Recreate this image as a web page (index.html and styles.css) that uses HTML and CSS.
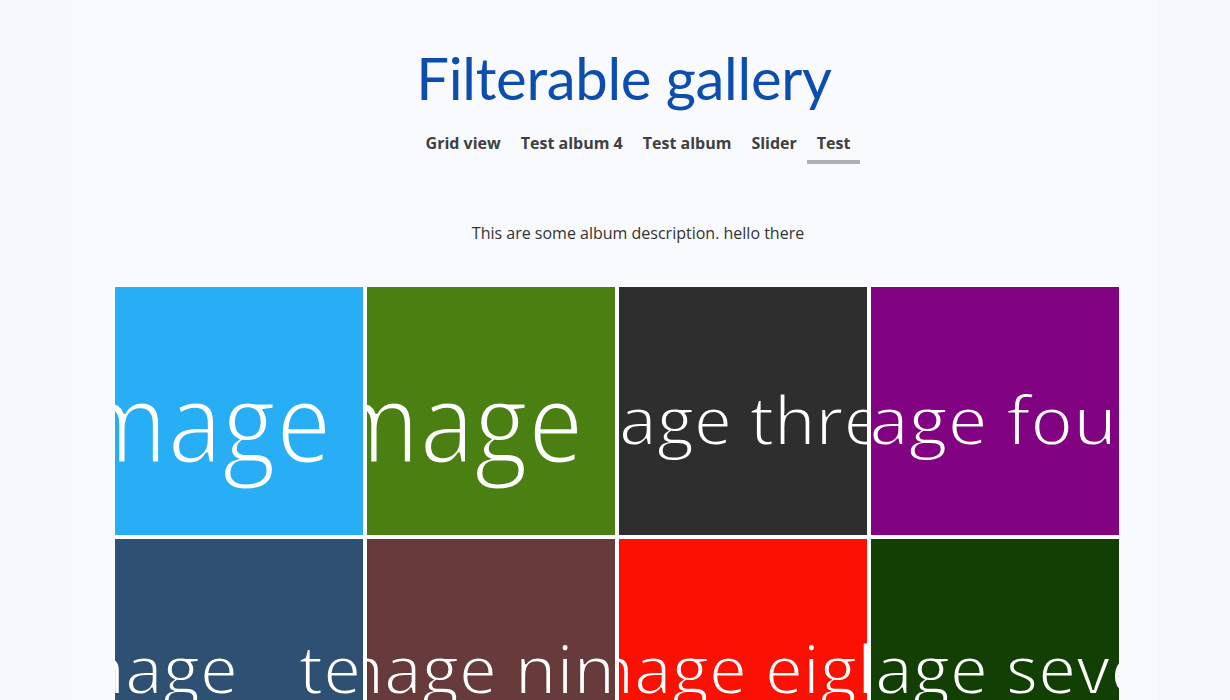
FILE: index.html
```html
<!DOCTYPE html>
<html lang="en">
<head>
<meta charset="utf-8">
<title>Filterable gallery</title>
<link rel="stylesheet" href="styles.css">
</head>
<body>
<main class="panel">
  <h1 class="title">Filterable gallery</h1>
  <nav class="tabs">
    <a class="tab">Grid view</a>
    <a class="tab">Test album 4</a>
    <a class="tab">Test album</a>
    <a class="tab">Slider</a>
    <a class="tab active">Test</a>
  </nav>
  <p class="desc">This are some album description. hello there</p>
  <div class="grid">
    <div class="tile row1 big c1"><span class="cap s1">image one</span></div>
    <div class="tile row1 big c2"><span class="cap s2">image two</span></div>
    <div class="tile row1 c3"><span class="cap s3">image three</span></div>
    <div class="tile row1 c4"><span class="cap s4">image four</span></div>
    <div class="tile row2 c5"><span class="cap s5">image ten</span></div>
    <div class="tile row2 c6"><span class="cap s6">image nine</span></div>
    <div class="tile row2 c7"><span class="cap s7">image eight</span></div>
    <div class="tile row2 c8"><span class="cap s8">image seven</span></div>
  </div>
</main>
</body>
</html>
```
FILE: styles.css
```css
html, body {
  margin: 0;
  padding: 0;
}
body {
  background: #f6f8fc;
  font-family: "Open Sans", "Noto Sans", sans-serif;
  height: 700px;
  overflow: hidden;
}
.panel {
  width: 1086px;
  margin-left: 72px;
  padding: 37px 42px 0;
  box-sizing: border-box;
  background: #f8fafd;
  min-height: 700px;
}
.title {
  margin: 0;
  font-family: Lato, "Open Sans", sans-serif;
  font-size: 58px;
  letter-spacing: -0.3px;
  font-weight: 400;
  line-height: 82px;
  color: #0d4dae;
  text-align: center;
  padding-left: 18px;
}
.tabs {
  display: flex;
  justify-content: center;
  margin-top: 13px;
  padding-left: 46px;
}
.tab {
  display: block;
  font-size: 16px;
  font-weight: 700;
  line-height: 22px;
  color: #404040;
  padding: 0 10px 6px;
  border-bottom: 4px solid transparent;
}
.tab.active {
  border-bottom-color: #b0b0b2;
}
.desc {
  margin: 58px 0 0;
  font-size: 16px;
  line-height: 22px;
  color: #333;
  text-align: center;
  padding-left: 46px;
}
.grid {
  margin-top: 42px;
  display: grid;
  grid-template-columns: repeat(4, 248px);
  grid-auto-rows: 248px;
  gap: 4px;
  padding: 1px;
  background: #fff;
  width: max-content;
}
.tile {
  overflow: hidden;
  color: #fff;
  font-family: "Open Sans", sans-serif;
  font-weight: 400;
  font-size: 68px;
  -webkit-text-stroke-width: 1.8px;
  box-sizing: border-box;
}
.tile.big {
  font-size: 111px;
  -webkit-text-stroke-width: 3px;
}
.row1 { padding-top: 85px; }
.row1.big { padding-top: 57px; }
.row2 { padding-top: 82px; }
.cap {
  display: inline-block;
  white-space: nowrap;
  line-height: 1;
  transform-origin: 0 0;
}
.big .cap {
  transform: scaleX(0.89);
}
.c1 { background: #28aef4; -webkit-text-stroke-color: #28aef4; }
.c2 { background: #4a8012; -webkit-text-stroke-color: #4a8012; }
.c3 { background: #2e2e2e; -webkit-text-stroke-color: #2e2e2e; }
.c4 { background: #820382; -webkit-text-stroke-color: #820382; }
.c5 { background: #2d5073; -webkit-text-stroke-color: #2d5073; }
.c6 { background: #673a3c; -webkit-text-stroke-color: #673a3c; }
.c7 { background: #fb1103; -webkit-text-stroke-color: #fb1103; }
.c8 { background: #113f04; -webkit-text-stroke-color: #113f04; }
.s1 { margin-left: -64px; }
.s2 { margin-left: -64px; word-spacing: 12px; }
.s3 { margin-left: -80px; }
.s4 { margin-left: -86px; transform: scaleX(1.05); }
.s5 { margin-left: -70px; word-spacing: 43px; }
.s6 { margin-left: -63px; }
.s7 { margin-left: -65px; }
.s8 { margin-left: -76px; }
```
